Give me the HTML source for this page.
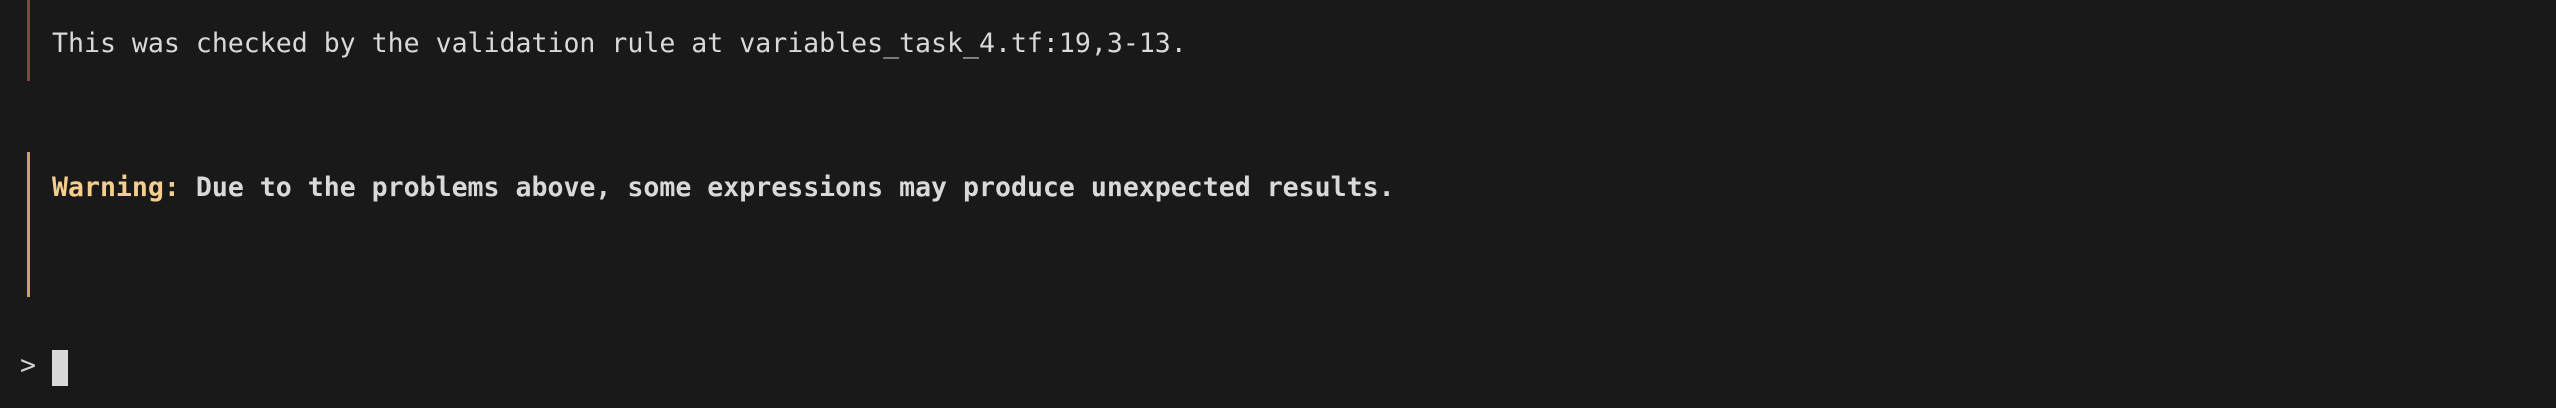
<!DOCTYPE html>
<html><head><style>
html,body{margin:0;padding:0;background:#191919;width:2556px;height:408px;overflow:hidden;}
.t{position:absolute;left:52px;font-family:"DejaVu Sans Mono","Liberation Mono",monospace;font-size:26.55px;line-height:40px;color:#d9d9d9;white-space:pre;}
.bar{position:absolute;left:27px;width:3px;}
</style></head><body>
<div class="bar" style="top:0;height:81px;background:#8e4141"></div>
<div class="t" style="top:24px">This was checked by the validation rule at variables_task_4.tf:19,3-13.</div>
<div class="bar" style="top:152px;height:145px;background:#c9a46a"></div>
<div class="t" style="top:168px;font-weight:bold"><span style="color:#f5cd8c">Warning:</span> Due to the problems above, some expressions may produce unexpected results.</div>
<div class="t" style="left:20px;top:346px;color:#d0d0d0">&gt;</div>
<div style="position:absolute;left:52px;top:350px;width:16px;height:36px;background:#d8d8d8"></div>
</body></html>
